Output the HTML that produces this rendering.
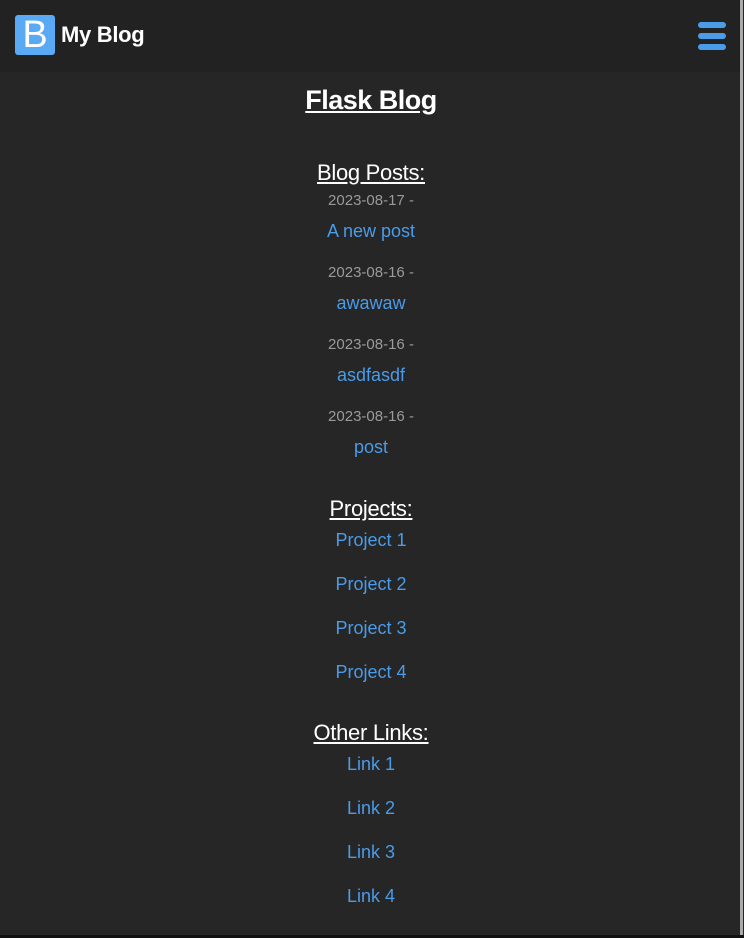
<!DOCTYPE html>
<html><head><meta charset="utf-8"><style>
html,body{margin:0;padding:0;}
body{width:744px;height:938px;background:#262626;font-family:"Liberation Sans",sans-serif;position:relative;overflow:hidden;}
.hdr{position:absolute;left:0;top:0;width:740px;height:72px;background:#222;}
.logo{position:absolute;left:15px;top:15px;width:40px;height:40px;background:#5aa9f5;border-radius:3px;color:#fff;font-size:38px;line-height:40px;text-align:center;}
.brand{position:absolute;left:61px;top:22px;color:#fff;font-size:22px;font-weight:bold;letter-spacing:-0.3px;}
.bar{position:absolute;left:698px;width:28px;height:6px;border-radius:3px;background:#4a9be8;}
.rb{position:absolute;left:740px;top:0;width:3px;height:935px;background:#aaa;}
.bb{position:absolute;left:0;top:935px;width:744px;height:3px;background:#111;}
.t{position:absolute;left:0;width:742px;text-align:center;white-space:nowrap;}
.h1{color:#fff;font-size:27px;font-weight:bold;text-decoration:underline;letter-spacing:-0.5px;}
.h2{color:#fff;font-size:22px;text-decoration:underline;letter-spacing:-0.3px;}
.d{color:#9a9a9a;font-size:15px;}
.a{color:#4a9be8;font-size:18px;}
</style></head><body>
<div class="hdr"><div class="logo">B</div><div class="brand">My Blog</div>
<div class="bar" style="top:22px"></div><div class="bar" style="top:33px"></div><div class="bar" style="top:44px"></div></div>
<div class="rb"></div><div class="bb"></div>
<div class="t h1" style="top:85px">Flask Blog</div>
<div class="t h2" style="top:160px">Blog Posts:</div>
<div class="t d" style="top:192px">2023-08-17 -</div>
<div class="t a" style="top:221px">A new post</div>
<div class="t d" style="top:264px">2023-08-16 -</div>
<div class="t a" style="top:293px">awawaw</div>
<div class="t d" style="top:336px">2023-08-16 -</div>
<div class="t a" style="top:365px">asdfasdf</div>
<div class="t d" style="top:408px">2023-08-16 -</div>
<div class="t a" style="top:437px">post</div>
<div class="t h2" style="top:496px">Projects:</div>
<div class="t a" style="top:530px">Project 1</div>
<div class="t a" style="top:574px">Project 2</div>
<div class="t a" style="top:618px">Project 3</div>
<div class="t a" style="top:662px">Project 4</div>
<div class="t h2" style="top:720px">Other Links:</div>
<div class="t a" style="top:754px">Link 1</div>
<div class="t a" style="top:798px">Link 2</div>
<div class="t a" style="top:842px">Link 3</div>
<div class="t a" style="top:886px">Link 4</div>
</body></html>
